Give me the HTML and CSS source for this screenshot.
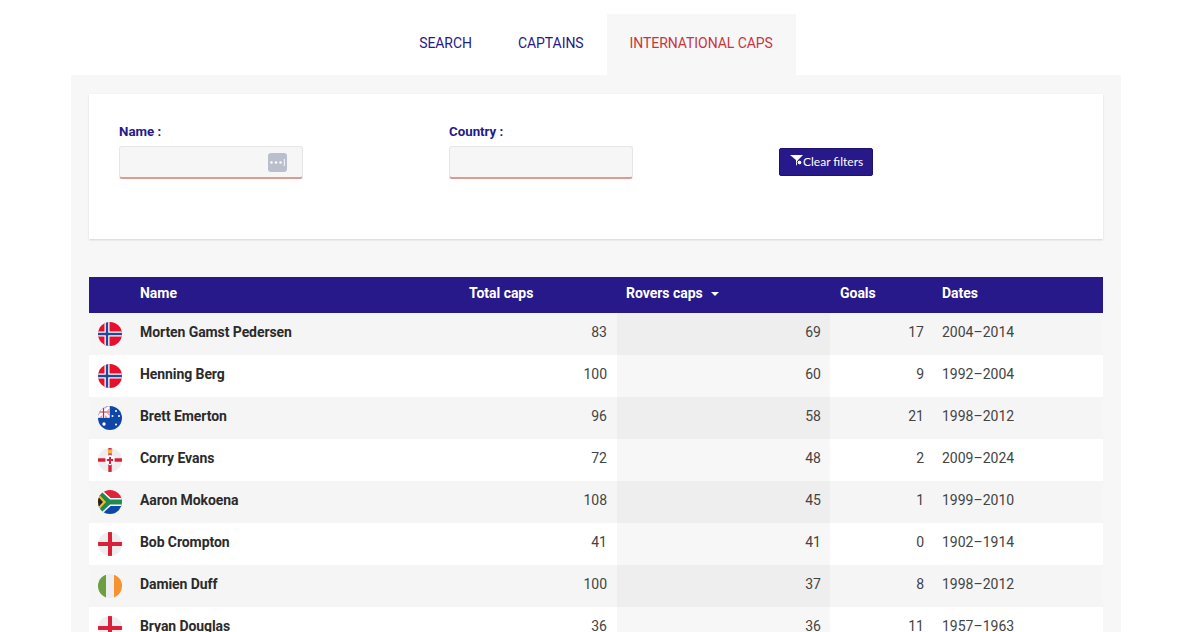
FILE: index.html
```html
<!DOCTYPE html>
<html lang="en">
<head>
  <meta charset="utf-8">
  <title>International caps</title>
  <link rel="stylesheet" href="styles.css">
</head>
<body>
  <nav class="tabs">
    <a class="tab" href="#">Search</a>
    <a class="tab" href="#">Captains</a>
    <a class="tab active" href="#">International caps</a>
  </nav>

  <main class="panel">
    <section class="filter-card">
      <div class="filter">
        <label class="filter-label">Name :</label>
        <div class="input-field">
          <span class="key-icon">
            <svg width="19" height="19" viewBox="0 0 19 19"><rect width="19" height="19" rx="3" fill="#b9bfcc"/><g fill="#fff"><circle cx="3.500" cy="9.500" r="1.200"/><circle cx="8" cy="9.500" r="1.200"/><circle cx="12.500" cy="9.500" r="1.200"/><rect x="15.800" y="6" width="0.900" height="7"/></g></svg>
          </span>
        </div>
      </div>
      <div class="filter">
        <label class="filter-label">Country :</label>
        <div class="input-field"></div>
      </div>
      <button class="clear-btn">
        <svg width="13" height="12" viewBox="0 0 13 12"><path d="M0 0h13L8 5v2.500L6 11V5z" fill="#fff"/><circle cx="9.500" cy="7.500" r="2.300" fill="#fff" stroke="#27198a" stroke-width="1"/></svg>Clear filters
      </button>
    </section>

    <table class="caps-table">
      <colgroup>
        <col class="col-flag"><col class="col-name"><col class="col-total"><col class="col-rovers"><col class="col-goals"><col>
      </colgroup>
      <thead>
        <tr>
          <th></th>
          <th>Name</th>
          <th>Total caps</th>
          <th class="sorted">Rovers caps <span class="sort-arrow"></span></th>
          <th>Goals</th>
          <th>Dates</th>
        </tr>
      </thead>
      <tbody>
        <tr>
          <td class="flag"><svg class="flag-icon" viewBox="0 0 24 24"><rect width="24" height="24" fill="#e8112d"/><path d="M6.500 0h5v24h-5zM0 9.500h24v5H0z" fill="#fff"/><path d="M7.800 0h2.400v24H7.800zM0 10.800h24v2.400H0z" fill="#1f4a9c"/></svg></td>
          <td class="name">Morten Gamst Pedersen</td><td class="num">83</td><td class="num sort-col">69</td><td class="num goals">17</td><td class="dates">2004–2014</td>
        </tr>
        <tr>
          <td class="flag"><svg class="flag-icon" viewBox="0 0 24 24"><rect width="24" height="24" fill="#e8112d"/><path d="M6.500 0h5v24h-5zM0 9.500h24v5H0z" fill="#fff"/><path d="M7.800 0h2.400v24H7.800zM0 10.800h24v2.400H0z" fill="#1f4a9c"/></svg></td>
          <td class="name">Henning Berg</td><td class="num">100</td><td class="num sort-col">60</td><td class="num goals">9</td><td class="dates">1992–2004</td>
        </tr>
        <tr>
          <td class="flag"><svg class="flag-icon" viewBox="0 0 24 24"><rect width="24" height="24" fill="#0f47a8"/><rect width="12" height="12" fill="#d9a0ad"/><path d="M0 1l11 10M11 1L0 11" stroke="#fff" stroke-width="2.400"/><path d="M5.500 0v12M0 6h12" stroke="#fff" stroke-width="2.600"/><path d="M5.500 0v12M0 6h12" stroke="#d8203a" stroke-width="1.200"/><g fill="#fff"><circle cx="6" cy="18" r="1.700"/><circle cx="18" cy="5" r="1"/><circle cx="14.500" cy="10" r="1"/><circle cx="21" cy="10" r="1"/><circle cx="18" cy="18.500" r="1"/></g></svg></td>
          <td class="name">Brett Emerton</td><td class="num">96</td><td class="num sort-col">58</td><td class="num goals">21</td><td class="dates">1998–2012</td>
        </tr>
        <tr>
          <td class="flag"><svg class="flag-icon" viewBox="0 0 24 24"><rect width="24" height="24" fill="#eeeeee"/><path d="M10.300 0h3.400v24h-3.400zM0 10.300h24v3.400H0z" fill="#d8203a"/><path d="M12 6.500l4.600 2.700v5.400L12 17.500l-4.600-2.900V9.200z" fill="#fff"/><path d="M11 9h2v7h-2zM8.800 11h6.400v2H8.800z" fill="#d8203a"/><path d="M9.500 1.500h5l-.6 4h-3.800z" fill="#efb73e"/></svg></td>
          <td class="name">Corry Evans</td><td class="num">72</td><td class="num sort-col">48</td><td class="num goals">2</td><td class="dates">2009–2024</td>
        </tr>
        <tr>
          <td class="flag"><svg class="flag-icon" viewBox="0 0 24 24"><rect width="24" height="12" fill="#e0243c"/><rect y="12" width="24" height="12" fill="#0f47a8"/><path d="M-3 -1L11 12L-3 25M11 12H26" fill="none" stroke="#fff" stroke-width="8"/><path d="M-3 -1L11 12L-3 25M11 12H26" fill="none" stroke="#1f8a4c" stroke-width="5"/><path d="M0 3.500L8 12L0 20.500z" fill="#f4b92f"/><path d="M0 6.500L5 12L0 17.500z" fill="#222"/></svg></td>
          <td class="name">Aaron Mokoena</td><td class="num">108</td><td class="num sort-col">45</td><td class="num goals">1</td><td class="dates">1999–2010</td>
        </tr>
        <tr>
          <td class="flag"><svg class="flag-icon" viewBox="0 0 24 24"><rect width="24" height="24" fill="#eeeeee"/><path d="M10 0h4v24h-4zM0 10h24v4H0z" fill="#d8203a"/></svg></td>
          <td class="name">Bob Crompton</td><td class="num">41</td><td class="num sort-col">41</td><td class="num goals">0</td><td class="dates">1902–1914</td>
        </tr>
        <tr>
          <td class="flag"><svg class="flag-icon" viewBox="0 0 24 24"><rect width="24" height="24" fill="#eeeeee"/><rect width="8" height="24" fill="#6d9e3f"/><rect x="16" width="8" height="24" fill="#f59331"/></svg></td>
          <td class="name">Damien Duff</td><td class="num">100</td><td class="num sort-col">37</td><td class="num goals">8</td><td class="dates">1998–2012</td>
        </tr>
        <tr>
          <td class="flag"><svg class="flag-icon" viewBox="0 0 24 24"><rect width="24" height="24" fill="#eeeeee"/><path d="M10 0h4v24h-4zM0 10h24v4H0z" fill="#d8203a"/></svg></td>
          <td class="name">Bryan Douglas</td><td class="num">36</td><td class="num sort-col">36</td><td class="num goals">11</td><td class="dates">1957–1963</td>
        </tr>
      </tbody>
    </table>
  </main>
</body>
</html>
```

FILE: styles.css
```css
html, body {
  height: 632px;
  overflow: hidden;
}

body {
  margin: 0;
  background: #fff;
  font-family: Roboto, 'Liberation Sans', sans-serif;
  color: #333;
}

/* tabs */
.tabs {
  display: flex;
  justify-content: center;
  margin: 14px 8px 0 0;
  height: 61px;
}

.tab {
  display: flex;
  align-items: center;
  padding: 0 23px 3px;
  font-size: 14px;
  letter-spacing: -0.06px;
  text-transform: uppercase;
  text-decoration: none;
  color: #27198a;
}

.tab.active {
  background: #f7f7f7;
  color: #c9353c;
}

/* main area */
.panel {
  margin: 0 79px 0 71px;
  padding: 19px 18px 0;
  background: #f7f7f7;
  height: 600px;
}

.filter-card {
  display: flex;
  align-items: flex-start;
  height: 145px;
  box-sizing: border-box;
  padding: 30px 30px 0;
  background: #fff;
  box-shadow: 0 1px 2px rgba(0, 0, 0, 0.14);
}

.filter {
  width: 330px;
}

.filter-label {
  display: block;
  font-size: 13.3px;
  font-weight: 700;
  line-height: 16px;
  color: #27198a;
  margin-bottom: 6px;
}

.input-field {
  display: flex;
  align-items: center;
  justify-content: flex-end;
  width: 184px;
  height: 33px;
  box-sizing: border-box;
  padding-right: 15px;
  background: #f6f6f6;
  border: 1px solid #e6e6e6;
  border-bottom: 2px solid #dd9a90;
  border-radius: 3px;
}

.key-icon {
  display: flex;
}

.clear-btn {
  display: flex;
  align-items: center;
  height: 28px;
  width: 94px;
  margin-top: 24px;
  padding: 0 0 2px 10px;
  box-sizing: border-box;
  background: #27198a;
  border: 1px solid #1f1370;
  border-radius: 2px;
  color: #fff;
  font-family: Lato, sans-serif;
  font-size: 12px;
  white-space: nowrap;
}

/* table */
.caps-table {
  width: 1014px;
  margin-top: 38px;
  border-collapse: collapse;
  table-layout: fixed;
  font-size: 14px;
}

.col-flag { width: 41px; }
.col-name { width: 329px; }
.col-total { width: 158px; }
.col-rovers { width: 213px; }
.col-goals { width: 102px; }

.caps-table th {
  height: 36px;
  padding: 0 10px 4px;
  box-sizing: border-box;
  background: #27198a;
  color: #fff;
  font-weight: 700;
  letter-spacing: -0.03px;
  text-align: left;
}

.caps-table th.sorted {
  padding-left: 9px;
}

.sort-arrow {
  display: inline-block;
  width: 0;
  height: 0;
  margin: 0 0 2px 5px;
  border-left: 4.5px solid transparent;
  border-right: 4.5px solid transparent;
  border-top: 4.5px solid #fff;
}

.caps-table td {
  height: 42px;
  padding: 0 10px 4px;
  box-sizing: border-box;
  color: #444;
}

.caps-table tbody tr:nth-child(odd) {
  background: #f5f5f5;
}

.caps-table tbody tr:nth-child(even) {
  background: #fff;
}

.caps-table tbody tr:nth-child(odd) .sort-col {
  background: #eeeeee;
}

.caps-table tbody tr:nth-child(even) .sort-col {
  background: #f7f7f7;
}

.caps-table td.flag {
  padding: 0 0 0 9px;
}

.flag-icon {
  display: block;
  width: 24px;
  height: 24px;
  border-radius: 50%;
}

.caps-table td.name {
  font-weight: 700;
  letter-spacing: -0.08px;
  color: #2b2b2b;
}

.caps-table td.num {
  text-align: right;
}

.caps-table td.sort-col {
  padding-right: 9px;
}

.caps-table td.goals {
  padding-right: 8px;
}

.caps-table td.dates {
  padding-left: 10px;
}
```
